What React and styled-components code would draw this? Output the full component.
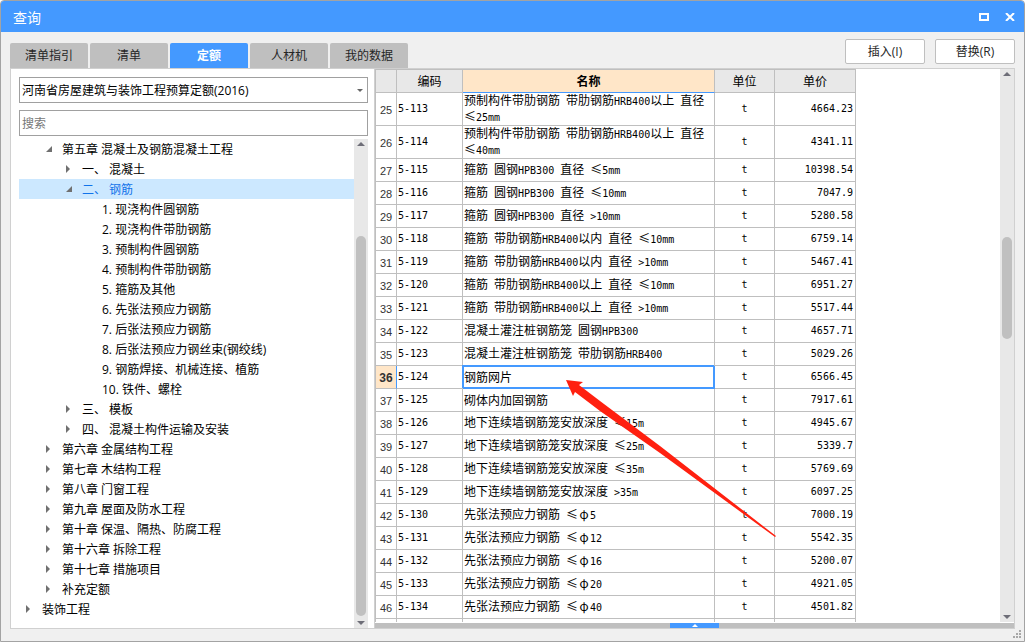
import React, { useState } from "react";
import styled, { createGlobalStyle } from "styled-components";

const blue = "#4499ff";
const line = "#bfbfbf";
const uiFont = `"Open Sans", "Noto Sans CJK SC", sans-serif`;

const GlobalStyle = createGlobalStyle`
  *, *::before, *::after { box-sizing: border-box; }
  body { margin: 0; background: #fff; }
  button, input, select { font: inherit; color: inherit; margin: 0; }
`;

const Dialog = styled.div`
  display: flex;
  flex-direction: column;
  position: relative;
  height: 100vh;
  border: 1px solid #a3a3a3;
  border-radius: 4px 4px 0 0;
  background: #f0f0f0;
  color: #000;
  font: 12px/20px ${uiFont};
  overflow: hidden;
`;

const TitleBar = styled.header`
  display: flex;
  flex: none;
  align-items: center;
  justify-content: space-between;
  height: 31px;
  padding: 0 8px 0 12px;
  background: ${blue};
  color: #fff;
`;

const Title = styled.h1`
  margin: 0;
  padding-top: 2px;
  font-size: 14px;
  font-weight: 400;
`;

const WindowButtons = styled.div`
  display: flex;
  gap: 14px;
`;

const WindowButton = styled.button`
  display: flex;
  align-items: center;
  justify-content: center;
  width: 12px;
  height: 16px;
  padding: 0;
  border: 0;
  background: none;
`;

const Toolbar = styled.div`
  display: flex;
  flex: none;
  justify-content: space-between;
  align-items: flex-end;
  height: 36px;
  padding: 0 9px;
`;

const Tabs = styled.div`
  display: flex;
  gap: 2px;
`;

const Tab = styled.button`
  width: 78px;
  height: 25px;
  padding: 1px 0 0;
  border: 0;
  border-radius: 2px 2px 0 0;
  background: ${(p) => (p.$active ? blue : line)};
  color: ${(p) => (p.$active ? "#fff" : "#262626")};
  font-weight: ${(p) => (p.$active ? 700 : 400)};
`;

const Actions = styled.div`
  display: flex;
  gap: 10px;
  padding-bottom: 4px;
`;

const ActionButton = styled.button`
  width: 80px;
  height: 25px;
  padding: 0;
  border: 1px solid ${line};
  border-radius: 2px;
  background: #fff;
  color: #262626;
`;

const Content = styled.main`
  display: flex;
  flex: 1;
  min-height: 0;
  margin: 0 9px 12px;
  border: 1px solid #d0d0d0;
  background: #fff;
`;

const Sidebar = styled.aside`
  display: flex;
  flex-direction: column;
  flex: none;
  width: 364px;
  padding: 8px 6px 0 8px;
  border-right: 1px solid #d0d0d0;
`;

const SelectBox = styled.div`
  display: grid;
  align-items: center;
  margin-bottom: 7px;

  > * { grid-area: 1 / 1; }
  > svg { justify-self: end; margin-right: 5px; pointer-events: none; }
`;

const Select = styled.select`
  appearance: none;
  width: 100%;
  height: 26px;
  padding: 1px 20px 0 2px;
  border: 1px solid #a0a0a0;
  border-radius: 0;
  background: #fff;
`;

const Search = styled.input`
  width: 100%;
  height: 26px;
  margin-bottom: 3px;
  padding: 0 2px;
  border: 1px solid #a0a0a0;
  background: #fff;
  &::placeholder { color: #777; opacity: 1; }
`;

const TreeArea = styled.div`
  display: flex;
  flex: 1;
  min-height: 0;
`;

const Tree = styled.div`
  flex: 1;
  overflow: hidden;
`;

const TreeRow = styled.div`
  display: flex;
  height: 20px;
  padding-left: ${(p) => p.$level * 20}px;
  background: ${(p) => (p.$selected ? "#cce8ff" : "transparent")};
  color: ${(p) => (p.$selected ? "#1173ea" : "#000")};
  line-height: 22px;
  white-space: nowrap;
`;

const Toggle = styled.span`
  display: flex;
  align-items: center;
  flex: none;
  width: 23px;
  padding-left: 7px;
`;

const Track = styled.div`
  display: flex;
  flex-direction: column;
  align-items: center;
  flex: none;
  width: 14px;
  padding: 3px 0;
  background: #e8e8e8;
`;

const Spacer = styled.div`
  flex: ${(p) => p.$grow} 1 0;
`;

const Thumb = styled.div`
  flex: ${(p) => p.$grow} 1 0;
  width: 10px;
  border-radius: 5px;
  background: #c0c0c0;
`;

const Main = styled.section`
  display: flex;
  flex-direction: column;
  flex: 1;
  min-width: 0;
`;

const GridArea = styled.div`
  display: flex;
  flex: 1;
  justify-content: space-between;
  min-height: 0;
`;

const GridView = styled.div`
  position: relative;
  flex: 1;
  overflow: hidden;
`;

const Grid = styled.table`
  width: 481px;
  table-layout: fixed;
  border-collapse: separate;
  border-spacing: 0;
  border-top: 1px solid ${line};
  border-left: 1px solid ${line};
`;

const Col = styled.col`
  width: ${(p) => p.$w}px;
`;

const HeadCell = styled.th`
  height: 23px;
  padding: 2px 0 0;
  border-right: 1px solid ${line};
  border-bottom: 1px solid ${(p) => (p.$active ? blue : line)};
  background: ${(p) => (p.$active ? "#ffe6c8" : "#e8e8e8")};
  font-weight: ${(p) => (p.$active ? 700 : 400)};
  line-height: 20px;
`;

const RowNumber = styled.th`
  padding: 2px 0 0;
  border-right: 1px solid ${(p) => (p.$active ? blue : line)};
  border-bottom: 1px solid ${line};
  background: ${(p) => (p.$active ? "#ffe6c8" : "#fff")};
  color: #333;
  font: ${(p) => (p.$active ? "700 12px" : "400 11px")}/14px "Liberation Sans", sans-serif;
`;

const Cell = styled.td`
  height: ${(p) => (p.$tall ? 33 : 23)}px;
  padding: 0 ${(p) => (p.$align === "right" ? 2 : 1)}px;
  border-right: 1px solid ${line};
  border-bottom: 1px solid ${line};
  font-family: "DejaVu Sans Mono", "Noto Sans CJK SC", monospace;
  font-size: 10px;
  line-height: 14px;
  text-align: ${(p) => p.$align || "left"};
`;

const NameCell = styled(Cell)`
  padding: 0 8px 0 1px;
  border-color: ${(p) => (p.$active ? blue : line)};
  font-family: "Noto Sans CJK SC", sans-serif;
  font-size: 12px;
  box-shadow: ${(p) =>
    p.$active ? `inset 1px 1px ${blue}, inset -1px -1px ${blue}, -1px -1px ${blue}` : "none"};
`;

const Half = styled.span`
  font-family: "DejaVu Sans Mono", monospace;
  font-size: 10px;
`;

const Wide = styled.span`
  display: inline-block;
  width: 12px;
  text-align: center;
`;

const Arrow = styled.svg`
  position: absolute;
  left: 190px;
  top: 309px;
  pointer-events: none;
`;

const Splitter = styled.div`
  display: flex;
  flex: none;
  justify-content: center;
  height: 5px;
  margin-top: 1px;
  background: ${line};
`;

const SplitterHandle = styled.button`
  display: flex;
  align-items: center;
  justify-content: center;
  width: 49px;
  height: 5px;
  padding: 0;
  border: 0;
  background: ${blue};
`;

const Grip = styled.svg`
  position: absolute;
  right: 3px;
  bottom: 3px;
`;

const tabs = ["清单指引", "清单", "定额", "人材机", "我的数据"];

const nodes = [
  [1, "第五章 混凝土及钢筋混凝土工程", "open"],
  [2, "一、 混凝土", "closed"],
  [2, "二、 钢筋", "open"],
  [3, "1. 现浇构件圆钢筋"],
  [3, "2. 现浇构件带肋钢筋"],
  [3, "3. 预制构件圆钢筋"],
  [3, "4. 预制构件带肋钢筋"],
  [3, "5. 箍筋及其他"],
  [3, "6. 先张法预应力钢筋"],
  [3, "7. 后张法预应力钢筋"],
  [3, "8. 后张法预应力钢丝束(钢绞线)"],
  [3, "9. 钢筋焊接、机械连接、植筋"],
  [3, "10. 铁件、螺栓"],
  [2, "三、 模板", "closed"],
  [2, "四、 混凝土构件运输及安装", "closed"],
  [1, "第六章 金属结构工程", "closed"],
  [1, "第七章 木结构工程", "closed"],
  [1, "第八章 门窗工程", "closed"],
  [1, "第九章 屋面及防水工程", "closed"],
  [1, "第十章 保温、隔热、防腐工程", "closed"],
  [1, "第十六章 拆除工程", "closed"],
  [1, "第十七章 措施项目", "closed"],
  [1, "补充定额", "closed"],
  [0, "装饰工程", "closed"],
];

const items = [
  ["预制构件带肋钢筋 带肋钢筋HRB400以上 直径 ≤25mm", "4664.23", true],
  ["预制构件带肋钢筋 带肋钢筋HRB400以上 直径 ≤40mm", "4341.11", true],
  ["箍筋 圆钢HPB300 直径 ≤5mm", "10398.54"],
  ["箍筋 圆钢HPB300 直径 ≤10mm", "7047.9"],
  ["箍筋 圆钢HPB300 直径 >10mm", "5280.58"],
  ["箍筋 带肋钢筋HRB400以内 直径 ≤10mm", "6759.14"],
  ["箍筋 带肋钢筋HRB400以内 直径 >10mm", "5467.41"],
  ["箍筋 带肋钢筋HRB400以上 直径 ≤10mm", "6951.27"],
  ["箍筋 带肋钢筋HRB400以上 直径 >10mm", "5517.44"],
  ["混凝土灌注桩钢筋笼 圆钢HPB300", "4657.71"],
  ["混凝土灌注桩钢筋笼 带肋钢筋HRB400", "5029.26"],
  ["钢筋网片", "6566.45"],
  ["砌体内加固钢筋", "7917.61"],
  ["地下连续墙钢筋笼安放深度 ≤15m", "4945.67"],
  ["地下连续墙钢筋笼安放深度 ≤25m", "5339.7"],
  ["地下连续墙钢筋笼安放深度 ≤35m", "5769.69"],
  ["地下连续墙钢筋笼安放深度 >35m", "6097.25"],
  ["先张法预应力钢筋 ≤φ5", "7000.19"],
  ["先张法预应力钢筋 ≤φ12", "5542.35"],
  ["先张法预应力钢筋 ≤φ16", "5200.07"],
  ["先张法预应力钢筋 ≤φ20", "4921.05"],
  ["先张法预应力钢筋 ≤φ40", "4501.82"],
];

function MixedText({ children }) {
  return children
    .split(/([ -~]+|φ)/)
    .filter(Boolean)
    .map((part, i) => {
      if (part === "φ") return <Wide key={i}>φ</Wide>;
      return /^[ -~]/.test(part) ? <Half key={i}>{part}</Half> : part;
    });
}

function Triangle({ state }) {
  return state === "open" ? (
    <svg width="6" height="6"><path d="M6 0V6H0Z" fill="#707070" /></svg>
  ) : (
    <svg width="4" height="8"><path d="M0 0L4 4L0 8Z" fill="#707070" /></svg>
  );
}

function ScrollBar({ before, size, after }) {
  return (
    <Track aria-hidden="true">
      <svg width="8" height="4"><path d="M0 4L4 0L8 4Z" fill="#6e6e78" /></svg>
      <Spacer $grow={before} />
      <Thumb $grow={size} />
      <Spacer $grow={after} />
      <svg width="8" height="4"><path d="M0 0L4 4L8 0Z" fill="#6e6e78" /></svg>
    </Track>
  );
}

export default function App() {
  const [tab, setTab] = useState(2);
  const [node, setNode] = useState(2);
  const [row, setRow] = useState(11);

  return (
    <Dialog lang="zh-CN">
      <GlobalStyle />
      <TitleBar>
        <Title>查询</Title>
        <WindowButtons>
          <WindowButton aria-label="最大化">
            <svg width="10" height="8"><path d="M1 1H9V7H1Z" fill="none" stroke="#fff" strokeWidth="2" /></svg>
          </WindowButton>
          <WindowButton aria-label="关闭">
            <svg width="10" height="8"><path d="M1 0L9 8M9 0L1 8" stroke="#fff" strokeWidth="2" /></svg>
          </WindowButton>
        </WindowButtons>
      </TitleBar>
      <Toolbar>
        <Tabs role="tablist">
          {tabs.map((t, i) => (
            <Tab key={t} role="tab" aria-selected={i === tab} $active={i === tab} onClick={() => setTab(i)}>{t}</Tab>
          ))}
        </Tabs>
        <Actions>
          <ActionButton>插入(I)</ActionButton>
          <ActionButton>替换(R)</ActionButton>
        </Actions>
      </Toolbar>
      <Content>
        <Sidebar>
          <SelectBox>
            <Select aria-label="定额库">
              <option>河南省房屋建筑与装饰工程预算定额(2016)</option>
            </Select>
            <svg width="6" height="3"><path d="M0 0H6L3 3Z" fill="#666" /></svg>
          </SelectBox>
          <Search aria-label="搜索" placeholder="搜索" />
          <TreeArea>
            <Tree role="tree">
              {nodes.map(([level, text, state], i) => (
                <TreeRow
                  key={text}
                  role="treeitem"
                  aria-level={level + 1}
                  aria-selected={i === node}
                  aria-expanded={state ? state === "open" : undefined}
                  $level={level}
                  $selected={i === node}
                  onClick={() => setNode(i)}
                >
                  <Toggle>{state && <Triangle state={state} />}</Toggle>
                  {text}
                </TreeRow>
              ))}
            </Tree>
            <ScrollBar before={90} size={380} after={5} />
          </TreeArea>
        </Sidebar>
        <Main>
          <GridArea>
            <GridView>
              <Grid>
                <colgroup>
                  {[21, 66, 252, 60, 81].map((w) => <Col key={w} $w={w} />)}
                </colgroup>
                <thead>
                  <tr>
                    <HeadCell />
                    <HeadCell>编码</HeadCell>
                    <HeadCell $active>名称</HeadCell>
                    <HeadCell>单位</HeadCell>
                    <HeadCell>单价</HeadCell>
                  </tr>
                </thead>
                <tbody>
                  {items.map(([name, price, tall], i) => (
                    <tr key={i} onClick={() => setRow(i)}>
                      <RowNumber $active={i === row}>{25 + i}</RowNumber>
                      <Cell $tall={tall}>5-{113 + i}</Cell>
                      <NameCell $active={i === row}><MixedText>{name}</MixedText></NameCell>
                      <Cell $align="center">t</Cell>
                      <Cell $align="right">{price}</Cell>
                    </tr>
                  ))}
                  <tr>
                    <RowNumber />
                    <Cell />
                    <NameCell />
                    <Cell />
                    <Cell />
                  </tr>
                </tbody>
              </Grid>
              <Arrow width="214" height="162" aria-hidden="true">
                <path d="M1 2L18 4L14 7L35 23L95 68L211 158L210 159L95 75L35 33L10 14L8 18Z" fill="#ff2010" />
              </Arrow>
            </GridView>
            <ScrollBar before={161} size={102} after={276} />
          </GridArea>
          <Splitter>
            <SplitterHandle aria-label="展开">
              <svg width="6" height="3"><path d="M0 3L3 0L6 3Z" fill="#fff" /></svg>
            </SplitterHandle>
          </Splitter>
        </Main>
      </Content>
      <Grip width="8" height="8" aria-hidden="true">
        <path d="M6 0h2v2h-2zM3 3h2v2h-2zM6 3h2v2h-2zM0 6h2v2h-2zM3 6h2v2h-2zM6 6h2v2h-2z" fill="#a8a8a8" />
      </Grip>
    </Dialog>
  );
}
